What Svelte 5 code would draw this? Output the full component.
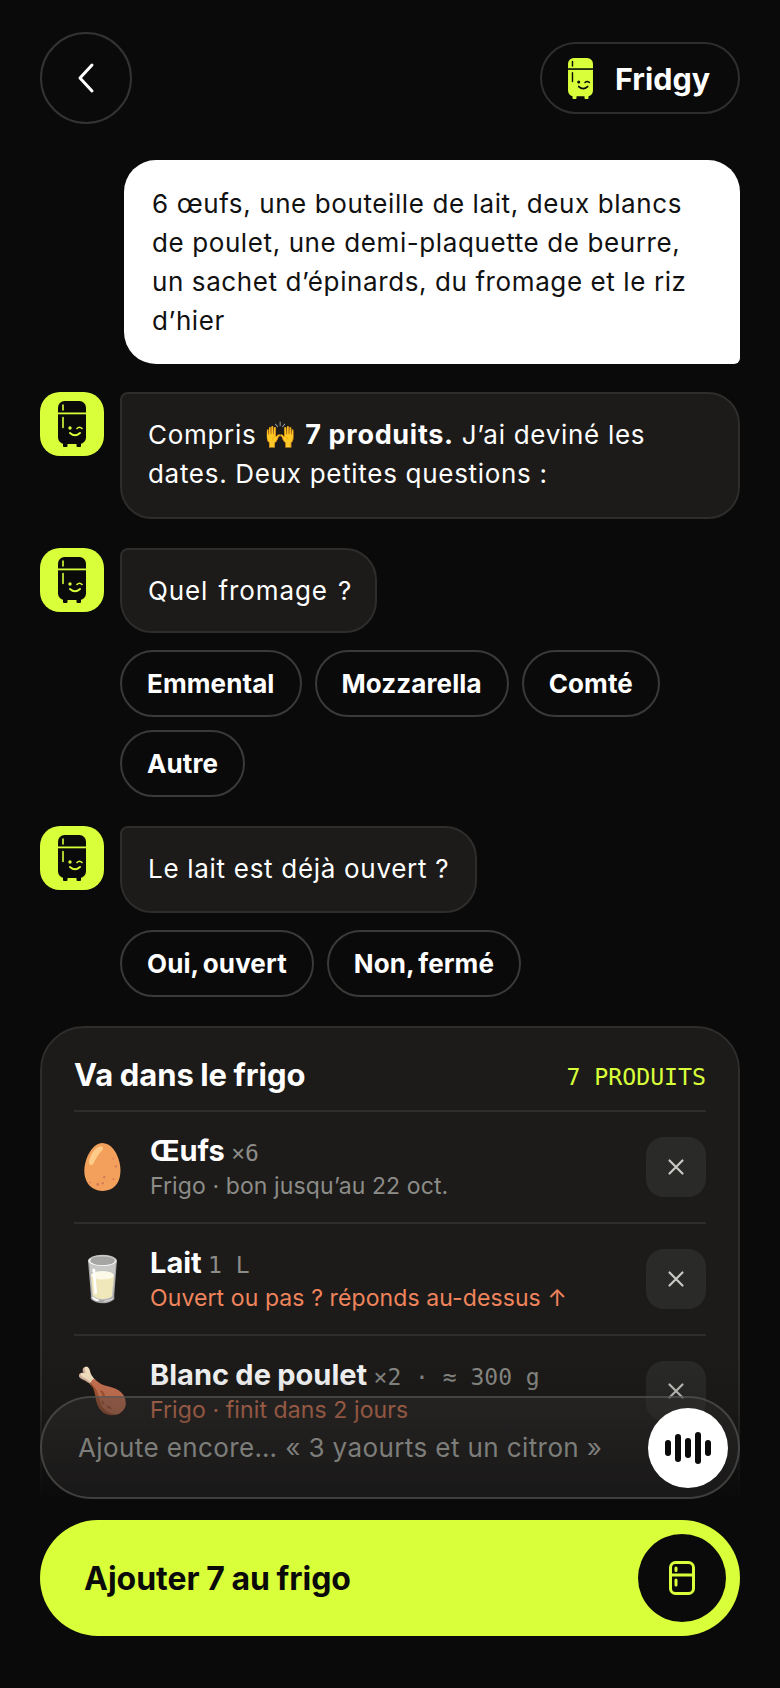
<script lang="ts">
  const fromage = ['Emmental', 'Mozzarella', 'Comté', 'Autre']
  const lait = ['Oui, ouvert', 'Non, fermé']
  const items = [
    { emoji: '🥚', name: 'Œufs', qty: '×6', note: 'Frigo · bon jusqu’au 22 oct.', tone: '' },
    { emoji: '🥛', name: 'Lait', qty: '1 L', note: 'Ouvert ou pas ? réponds au-dessus ↑', tone: 'warn' },
    { emoji: '🍗', name: 'Blanc de poulet', qty: '×2 · ≈ 300 g', note: 'Frigo · finit dans 2 jours', tone: 'warn' }
  ]
  const bars = [
    [0, 16],
    [10, 28],
    [20, 20],
    [30, 32],
    [40, 16]
  ]
</script>

{#snippet fridge(body: string, detail: string, w: number, h: number)}
  <svg width={w} height={h} viewBox="0 0 28 46" fill="none" aria-hidden="true">
    <rect x="5" y="41" width="4.5" height="5" rx="1" fill={body} />
    <rect x="18.5" y="41" width="4.5" height="5" rx="1" fill={body} />
    <rect width="28" height="43" rx="6.5" fill={body} />
    <rect y="11.5" width="28" height="1.8" fill={detail} />
    <path d="M5 4v5M5 16.500v10" stroke={detail} stroke-width="1.6" stroke-linecap="round" />
    <circle cx="12" cy="27" r="1.700" fill={detail} />
    <path d="M19 27.500q2.500-2.500 5 0" stroke={detail} stroke-width="1.600" stroke-linecap="round" />
    <path d="M12 32q5 4.500 10 0" stroke={detail} stroke-width="1.900" stroke-linecap="round" />
  </svg>
{/snippet}

{#snippet avatar()}
  <div class="avatar">{@render fridge('#0a0a0a', '#d8ff3a', 28, 46)}</div>
{/snippet}

<div class="page">
  <header class="top">
    <button class="back" aria-label="Retour">
      <svg width="22" height="32" viewBox="0 0 22 32" fill="none">
        <path d="M17 3 5 16l12 13" stroke="#fff" stroke-width="3" stroke-linecap="round" stroke-linejoin="round" />
      </svg>
    </button>
    <div class="brand">
      {@render fridge('#d8ff3a', '#0a0a0a', 25, 41)}
      <span>Fridgy</span>
    </div>
  </header>

  <div class="user">6 œufs, une bouteille de lait, deux blancs de poulet, une demi-plaquette de beurre, un sachet d’épinards, du fromage et le riz d’hier</div>

  <div class="bot first">
    {@render avatar()}
    <div class="bubble wide">Compris 🙌 <b>7 produits.</b> J’ai deviné les dates. Deux petites questions :</div>
  </div>

  <div class="bot">
    {@render avatar()}
    <div class="bubble short">Quel fromage ?</div>
  </div>
  <div class="chips">
    {#each fromage as c}<button class="chip">{c}</button>{/each}
  </div>

  <div class="bot">
    {@render avatar()}
    <div class="bubble">Le lait est déjà ouvert ?</div>
  </div>
  <div class="chips">
    {#each lait as c}<button class="chip">{c}</button>{/each}
  </div>

  <section class="card">
    <div class="card-head">
      <h2>Va dans le frigo</h2>
      <span class="count">7 PRODUITS</span>
    </div>
    {#each items as it}
      <div class="row">
        <span class="emoji">{it.emoji}</span>
        <div class="info">
          <div class="name">{it.name} <span class="qty">{it.qty}</span></div>
          <div class="note {it.tone}">{it.note}</div>
        </div>
        <button class="remove" aria-label="Retirer">
          <svg width="18" height="18" viewBox="0 0 18 18" fill="none">
            <path d="M2.500 2.500l13 13M15.500 2.500l-13 13" stroke="#c9c9c5" stroke-width="2.200" stroke-linecap="round" />
          </svg>
        </button>
      </div>
    {/each}
  </section>

  <div class="dock">
    <div class="composer">
      <span class="hint">Ajoute encore… « 3 yaourts et un citron »</span>
      <button class="mic" aria-label="Dicter">
        <svg width="46" height="32" viewBox="0 0 46 32" fill="none">
          {#each bars as [x, h]}
            <rect x={x} y={16 - h / 2} width="6" height={h} rx="3" fill="#0a0a0a" />
          {/each}
        </svg>
      </button>
    </div>
    <button class="cta">
      <span>Ajouter 7 au frigo</span>
      <span class="cta-icon">
        <svg width="26" height="34" viewBox="0 0 26 34" fill="none">
          <rect x="1.500" y="1.500" width="23" height="31" rx="5" stroke="#d8ff3a" stroke-width="3" />
          <path d="M2 14h22M7 7v2.500M7 19v5" stroke="#d8ff3a" stroke-width="3" stroke-linecap="round" />
        </svg>
      </span>
    </button>
  </div>
</div>

<style>
  :global(body) {
    margin: 0;
    background: #0a0a0a;
  }

  button {
    font: inherit;
    color: inherit;
    padding: 0;
    background: none;
    border: 0;
  }

  .page {
    position: relative;
    box-sizing: border-box;
    width: 780px;
    height: 1688px;
    padding: 32px 40px 0;
    display: flex;
    flex-direction: column;
    overflow: hidden;
    background: #0a0a0a;
    color: #fff;
    font-family: Inter, 'Liberation Sans', sans-serif;
    font-size: 26px;
    line-height: 39px;
  }

  .top {
    display: flex;
    align-items: center;
    justify-content: space-between;
    margin-bottom: 36px;
  }

  .back {
    width: 92px;
    height: 92px;
    display: flex;
    align-items: center;
    justify-content: center;
    border: 2px solid #333331;
    border-radius: 50%;
    box-sizing: border-box;
  }

  .brand {
    box-sizing: border-box;
    width: 200px;
    height: 72px;
    display: flex;
    align-items: center;
    gap: 22px;
    padding-left: 26px;
    border: 2px solid #2e2e2c;
    border-radius: 36px;
    font-size: 30.5px;
    font-weight: 700;
  }

  .user {
    box-sizing: border-box;
    width: 616px;
    margin-left: 84px;
    padding: 24px 28px;
    background: #fff;
    color: #111;
    border-radius: 32px 32px 6px 32px;
    letter-spacing: 0.6px;
  }

  .bot {
    display: flex;
    align-items: flex-start;
    gap: 16px;
    margin-top: 29px;
  }

  .bot.first {
    margin-top: 28px;
  }

  .avatar {
    flex: none;
    width: 64px;
    height: 64px;
    display: flex;
    align-items: center;
    justify-content: center;
    background: #d8ff3a;
    border-radius: 20px;
  }

  .bubble {
    box-sizing: border-box;
    padding: 21px 26px 23px;
    background: #1c1b19;
    border: 2px solid #2e2d2b;
    border-radius: 8px 32px 32px 32px;
    letter-spacing: 0.7px;
  }

  .bubble.wide {
    flex: 1;
    padding-bottom: 24px;
  }

  .bubble.short {
    padding-right: 23px;
    padding-bottom: 21px;
    letter-spacing: 0.9px;
    word-spacing: 2px;
  }

  .bubble b {
    font-size: 27px;
    font-weight: 700;
  }

  .chips {
    display: flex;
    flex-wrap: wrap;
    gap: 13px;
    margin: 17px 0 0 80px;
  }

  .chip {
    box-sizing: border-box;
    height: 67px;
    padding: 0 25px;
    border: 2px solid #3a3a38;
    border-radius: 34px;
    font-weight: 700;
    font-size: 26px;
    letter-spacing: 0.1px;
    word-spacing: -2px;
  }

  .card {
    flex: 1;
    margin-top: 29px;
    padding: 0 32px;
    background: #1c1b19;
    border: 2px solid #2e2d2b;
    border-radius: 44px;
  }

  .card-head {
    box-sizing: border-box;
    height: 82px;
    padding-top: 10px;
    display: flex;
    align-items: center;
    justify-content: space-between;
  }

  h2 {
    margin: 0;
    font-size: 31px;
    font-weight: 700;
    word-spacing: -1px;
  }

  .count {
    margin-top: 5px;
    font-family: 'DejaVu Sans Mono', monospace;
    font-size: 23.200px;
    color: #d8ff3a;
  }

  .row {
    height: 110px;
    display: flex;
    align-items: center;
    border-top: 2px solid #2e2d2b;
  }

  .emoji {
    width: 76px;
    padding-left: 1px;
    box-sizing: border-box;
    font-size: 44px;
    line-height: 56px;
    font-family: 'Noto Color Emoji', sans-serif;
  }

  .info {
    flex: 1;
  }

  .name {
    font-size: 29px;
    font-weight: 700;
    line-height: 36px;
    word-spacing: -0.5px;
  }

  .qty {
    font-family: 'DejaVu Sans Mono', monospace;
    font-size: 23px;
    font-weight: 400;
    color: #8c8c88;
    word-spacing: 0;
  }

  .note {
    font-size: 23px;
    line-height: 30px;
    color: #8c8c88;
    letter-spacing: 0.1px;
  }

  .note.warn {
    color: #f0845c;
  }

  .remove {
    width: 60px;
    height: 60px;
    display: flex;
    align-items: center;
    justify-content: center;
    background: #2a2a28;
    border-radius: 18px;
  }

  .dock {
    position: absolute;
    left: 0;
    right: 0;
    bottom: 0;
    height: 348px;
    box-sizing: border-box;
    padding: 56px 40px 0;
    background: linear-gradient(
      to bottom,
      rgba(10, 10, 10, 0) 10px,
      rgba(10, 10, 10, 0.18) 70px,
      #0a0a0a 160px
    );
  }

  .composer {
    box-sizing: border-box;
    height: 103px;
    display: flex;
    align-items: center;
    justify-content: space-between;
    padding: 0 10px 0 36px;
    background: rgba(54, 53, 51, 0.35);
    border: 2px solid rgba(90, 90, 88, 0.6);
    border-radius: 52px;
  }

  .hint {
    color: #7d7d7a;
    font-size: 26px;
    letter-spacing: 0.4px;
  }

  .mic {
    width: 80px;
    height: 80px;
    display: flex;
    align-items: center;
    justify-content: center;
    background: #fff;
    border-radius: 50%;
  }

  .cta {
    box-sizing: border-box;
    width: 100%;
    height: 116px;
    margin-top: 21px;
    display: flex;
    align-items: center;
    justify-content: space-between;
    padding: 0 14px 0 44px;
    background: #d8ff3a;
    color: #0a0a0a;
    border-radius: 58px;
    font-size: 32px;
    font-weight: 700;
    word-spacing: -1px;
  }

  .cta-icon {
    width: 88px;
    height: 88px;
    display: flex;
    align-items: center;
    justify-content: center;
    background: #0a0a0a;
    border-radius: 50%;
  }
</style>
